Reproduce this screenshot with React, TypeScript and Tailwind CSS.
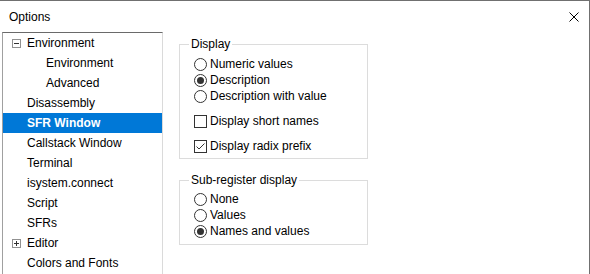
import type { ReactNode } from "react";

const FONT = { fontFamily: '"Segoe UI", "Liberation Sans", Arial, sans-serif' };

type TreeItem = { label: string; level: 0 | 1; toggle?: "minus" | "plus"; selected?: boolean };

const TREE: TreeItem[] = [
  { label: "Environment", level: 0, toggle: "minus" },
  { label: "Environment", level: 1 },
  { label: "Advanced", level: 1 },
  { label: "Disassembly", level: 0 },
  { label: "SFR Window", level: 0, selected: true },
  { label: "Callstack Window", level: 0 },
  { label: "Terminal", level: 0 },
  { label: "isystem.connect", level: 0 },
  { label: "Script", level: 0 },
  { label: "SFRs", level: 0 },
  { label: "Editor", level: 0, toggle: "plus" },
  { label: "Colors and Fonts", level: 0 },
];

function Toggle({ kind }: { kind: "minus" | "plus" }) {
  return (
    <svg width="9" height="9" viewBox="0 0 9 9" className="block">
      <rect x="0.5" y="0.5" width="8" height="8" fill="#fff" stroke="#919191" />
      <line x1="2" y1="4.5" x2="7" y2="4.5" stroke="#333" />
      {kind === "plus" && <line x1="4.5" y1="2" x2="4.5" y2="7" stroke="#333" />}
    </svg>
  );
}

function Radio({ checked, children }: { checked?: boolean; children: ReactNode }) {
  return (
    <div className="flex h-[16px] items-center gap-[3px]">
      <span className="flex h-[13px] w-[13px] items-center justify-center rounded-full border border-[#333] bg-white">
        {checked && <span className="h-[7px] w-[7px] rounded-full bg-[#333]" />}
      </span>
      <span>{children}</span>
    </div>
  );
}

function Check({ checked, children }: { checked?: boolean; children: ReactNode }) {
  return (
    <div className="flex h-[16px] items-center gap-[3px]">
      <span className="flex h-[13px] w-[13px] items-center justify-center border border-[#333] bg-white">
        {checked && (
          <svg width="11" height="11" viewBox="0 0 11 11">
            <path d="M1.5 5.5 L4 8 L9.5 2.5" fill="none" stroke="#333" strokeWidth="1" />
          </svg>
        )}
      </span>
      <span>{children}</span>
    </div>
  );
}

function Group({ title, children, className }: { title: string; children: ReactNode; className?: string }) {
  return (
    <fieldset className={`w-[189px] border border-[#dcdcdc] pl-[14px] ${className ?? ""}`}>
      <legend className="-ml-[5px] px-[2px] leading-[15px]">{title}</legend>
      {children}
    </fieldset>
  );
}

export default function App() {
  return (
    <div
      className="h-[274px] w-[590px] overflow-hidden border-t border-r border-[#707070] bg-white text-[12px] text-black"
      style={FONT}
    >
      {/* title bar */}
      <div className="flex h-[31px] items-center justify-between pl-[9px] pr-[9px]">
        <span>Options</span>
        <svg width="10" height="10" viewBox="0 0 10 10" className="mr-[1px]">
          <path d="M0.5 0.5 L9.5 9.5 M9.5 0.5 L0.5 9.5" stroke="#000" strokeWidth="1" />
        </svg>
      </div>

      <div className="flex">
        {/* tree */}
        <div className="ml-[2px] h-[260px] w-[161px] border-t border-l border-r border-t-[#6a6a6a] border-l-[#a0a0a0] border-r-[#dadada]">
          {TREE.map((item, i) => (
            <div
              key={i}
              className={`flex h-[20px] items-center ${item.selected ? "bg-[#0078d7] font-bold text-white" : ""}`}
            >
              <span className="flex w-[24px] justify-end pr-[6px]">{item.toggle && <Toggle kind={item.toggle} />}</span>
              <span className={item.level === 1 ? "pl-[19px]" : ""}>{item.label}</span>
            </div>
          ))}
        </div>

        {/* settings */}
        <div className="flex flex-col pl-[16px] pt-[5px]">
          <Group title="Display" className="h-[122px]">
            <div className="mt-[4px] flex flex-col">
              <Radio>Numeric values</Radio>
              <Radio checked>Description</Radio>
              <Radio>Description with value</Radio>
              <div className="mt-[9px]">
                <Check>Display short names</Check>
              </div>
              <div className="mt-[9px]">
                <Check checked>Display radix prefix</Check>
              </div>
            </div>
          </Group>
          <Group title="Sub-register display" className="mt-[14px] h-[72px]">
            <div className="mt-[3px] flex flex-col">
              <Radio>None</Radio>
              <Radio>Values</Radio>
              <Radio checked>Names and values</Radio>
            </div>
          </Group>
        </div>
      </div>
    </div>
  );
}
